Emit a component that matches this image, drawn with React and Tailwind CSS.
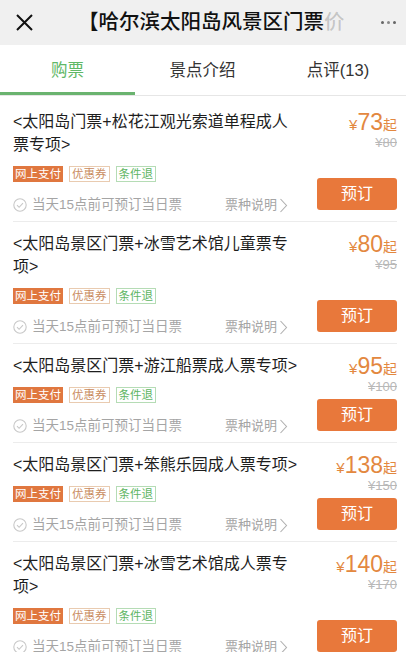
import React from 'react';

const TICKETS = [
  { title: '<太阳岛门票+松花江观光索道单程成人票专项>', price: 73, orig: 80 },
  { title: '<太阳岛景区门票+冰雪艺术馆儿童票专项>', price: 80, orig: 95 },
  { title: '<太阳岛景区门票+游江船票成人票专项>', price: 95, orig: 100 },
  { title: '<太阳岛景区门票+笨熊乐园成人票专项>', price: 138, orig: 150 },
  { title: '<太阳岛景区门票+冰雪艺术馆成人票专项>', price: 140, orig: 170 },
];

const FONT = { fontFamily: '"Liberation Sans", "Noto Sans CJK SC", sans-serif' };

function CheckCircle() {
  return (
    <svg width="14" height="14" viewBox="0 0 14 14" fill="none" stroke="#c8c8c8" strokeWidth="1.1">
      <circle cx="7" cy="7" r="6.2" />
      <path d="M4 7.2l2.1 2.1L10 5.2" />
    </svg>
  );
}

function Ticket({ t }) {
  return (
    <div className="ml-[13px] mr-[9px] flex border-b border-[#ececec] pt-[10px] pb-[6px]">
      <div className="flex-1">
        <p className="text-[16px] leading-[23px] text-[#1e1e1e] w-[287px]">{t.title}</p>
        <div className="mt-[10px] flex gap-[6px] h-[16px] text-[11.5px] leading-[14px]">
          <span className="bg-[#e0773f] text-white px-[2px] leading-[16px]">网上支付</span>
          <span className="border border-[#e9cbb0] text-[#c98c5e] px-[2px]">优惠券</span>
          <span className="border border-[#b5dcb5] text-[#5eb563] px-[2px]">条件退</span>
        </div>
        <div className="mt-[13px] h-[20px] flex items-center pr-[12px]">
          <CheckCircle />
          <span className="ml-[5px] text-[13.5px] text-[#a5a5a5]">当天15点前可预订当日票</span>
          <span className="ml-auto text-[13px] text-[#a5a5a5] flex items-center">
            票种说明
            <svg width="9" height="15" viewBox="0 0 9 15" fill="none" stroke="#b0b0b0" strokeWidth="1.1" className="ml-[2px]">
              <path d="M1.5 1l6 6.5-6 6.5" />
            </svg>
          </span>
        </div>
      </div>
      <div className="w-[97px] flex flex-col items-end justify-between">
        <div>
          <div className="flex items-baseline justify-end h-[24px] text-[#e3883f]">
            <span className="text-[15px]">¥</span>
            <span className="text-[23px] leading-[24px]">{t.price}</span>
            <span className="text-[14px]">起</span>
          </div>
          <div className="text-right text-[13px] leading-[18px] text-[#b8b8b8] line-through">¥{t.orig}</div>
        </div>
        <button className="mt-[3px] mb-[5px] w-[80px] h-[32px] rounded-[3px] bg-[#e8783b] text-white text-[16px]">预订</button>
      </div>
    </div>
  );
}

export default function App() {
  return (
    <div className="w-[406px] h-[652px] overflow-hidden bg-white" style={FONT}>
      <div className="h-[45px] bg-[#f0f0f0] flex items-center">
        <div className="w-[78px] pl-[15px]">
          <svg width="19" height="19" viewBox="0 0 19 19" stroke="#111" strokeWidth="2">
            <path d="M2 2l15 15M17 2L2 17" />
          </svg>
        </div>
        <div className="flex-1 whitespace-nowrap text-[20.5px] font-medium text-[#111]">
          【哈尔滨太阳岛风景区门票<span className="text-[#111]/20">价</span>
        </div>
        <div className="mr-[10px] flex gap-[3px]">
          <span className="w-[3px] h-[3px] rounded-full bg-[#666]" />
          <span className="w-[3px] h-[3px] rounded-full bg-[#888]" />
          <span className="w-[3px] h-[3px] rounded-full bg-[#666]" />
        </div>
      </div>
      <div className="h-[51px] flex border-b border-[#e6e6e6] text-[16.5px]">
        <div className="w-[135px] flex items-center justify-center text-[#5fb866] border-b-[3px] border-[#6ab36f] pt-[3px]">购票</div>
        <div className="w-[135px] flex items-center justify-center text-[#333]">景点介绍</div>
        <div className="flex-1 flex items-center justify-center text-[#333]">点评(13)</div>
      </div>
      <div className="pt-[4px]">
        {TICKETS.map(t => <Ticket key={t.price} t={t} />)}
      </div>
    </div>
  );
}
